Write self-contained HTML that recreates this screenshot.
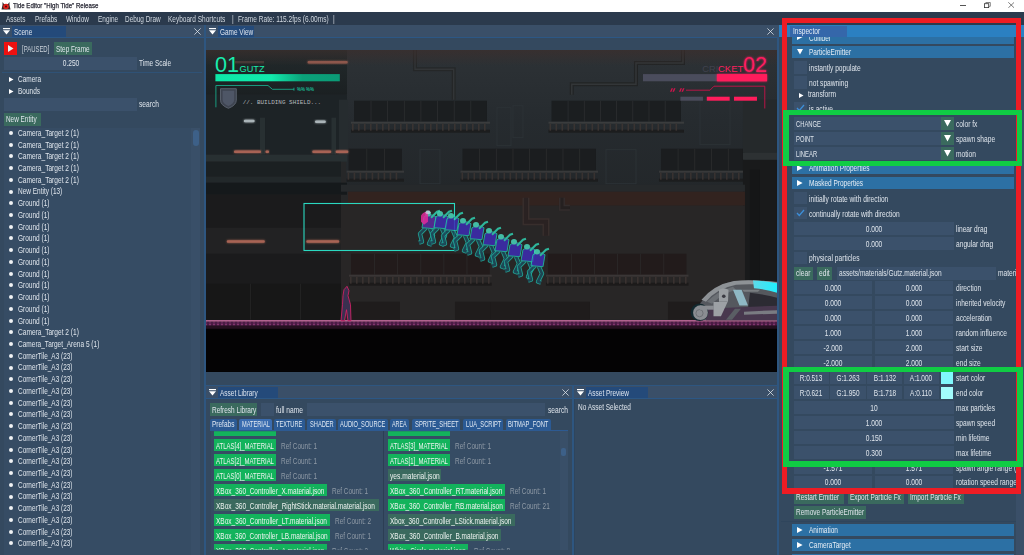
<!DOCTYPE html>
<html><head><meta charset="utf-8"><style>
html,body{margin:0;padding:0;width:1024px;height:555px;overflow:hidden;background:#34495f}
body{position:relative;font-family:"Liberation Sans",sans-serif}
div{position:absolute;box-sizing:border-box}
.t{white-space:nowrap;line-height:8px;transform-origin:0 0}
.c{text-align:center;transform-origin:50% 0}
</style></head><body>
<div style="left:0.00px;top:0.00px;width:1024.00px;height:555.00px;background:#34495f;"></div>
<div style="left:0.00px;top:0.00px;width:1024.00px;height:12.00px;background:#ffffff;"></div>
<svg style="position:absolute;left:1px;top:1px" width="10" height="10" viewBox="0 0 10 10"><path d="M1.5 1 L3 3 L7 3 L8.5 1 L8.5 4 L9.5 8.5 L0.5 8.5 L1.5 4Z" fill="#3a2a2a"/><circle cx="5" cy="5.5" r="2.8" fill="#e0201a"/><circle cx="5" cy="5.5" r="0.9" fill="#400"/></svg>
<div class="t" style="left:12.90px;top:2.16px;font-size:7.9px;color:#101018;transform:scaleX(0.775);-webkit-text-stroke:0.25px #303040;">Tide Editor "High Tide" Release</div>
<div style="left:960.00px;top:5.20px;width:5.60px;height:0.70px;background:#555;"></div>
<svg style="position:absolute;left:983.5px;top:2.2px" width="7" height="6" viewBox="0 0 7 6"><rect x="0.5" y="1.7" width="4.2" height="3.9" fill="none" stroke="#333" stroke-width="0.8"/><path d="M1.8 1.7 V0.5 H6.3 V4.3 H4.7" fill="none" stroke="#666" stroke-width="0.8"/></svg>
<svg style="position:absolute;left:1007.8px;top:2.2px" width="6.5" height="6.2" viewBox="0 0 6.5 6.2"><path d="M0.3 0.3 L6.2 5.9 M6.2 0.3 L0.3 5.9" stroke="#444" stroke-width="0.7"/></svg>
<div style="left:0.00px;top:12.00px;width:1024.00px;height:13.00px;background:#2b3a4d;"></div>
<div class="t" style="left:6.40px;top:14.72px;font-size:8.6px;color:#d0d7df;transform:scaleX(0.752);">Assets</div>
<div class="t" style="left:35.20px;top:14.72px;font-size:8.6px;color:#d0d7df;transform:scaleX(0.754);">Prefabs</div>
<div class="t" style="left:66.20px;top:14.72px;font-size:8.6px;color:#d0d7df;transform:scaleX(0.748);">Window</div>
<div class="t" style="left:97.70px;top:14.72px;font-size:8.6px;color:#d0d7df;transform:scaleX(0.752);">Engine</div>
<div class="t" style="left:125.30px;top:14.72px;font-size:8.6px;color:#d0d7df;transform:scaleX(0.748);">Debug Draw</div>
<div class="t" style="left:168.00px;top:14.72px;font-size:8.6px;color:#d0d7df;transform:scaleX(0.758);">Keyboard Shortcuts</div>
<div class="t" style="left:232.00px;top:14.72px;font-size:8.6px;color:#d0d7df;transform:scaleX(0.772);">|</div>
<div class="t" style="left:238.00px;top:14.72px;font-size:8.6px;color:#d0d7df;transform:scaleX(0.763);">Frame Rate: 115.2fps (6.00ms)</div>
<div class="t" style="left:333.00px;top:14.72px;font-size:8.6px;color:#d0d7df;transform:scaleX(0.772);">|</div>
<div style="left:0.00px;top:25.00px;width:204.00px;height:12.00px;background:#3a4f68;"></div>
<div style="left:0.00px;top:37.00px;width:204.00px;height:1.00px;background:#2c5785;"></div>
<svg style="position:absolute;left:3.00px;top:28.00px" width="7" height="7" viewBox="0 0 7 7"><rect x="0" y="0" width="7" height="1.2" fill="#fff"/><path d="M0 2.2 H7 L3.5 6.5Z" fill="#fff"/></svg>
<div style="left:12.00px;top:26.00px;width:54.00px;height:11.00px;background:#244a7a;"></div>
<div class="t" style="left:14.00px;top:27.92px;font-size:8.6px;color:#dde4ee;transform:scaleX(0.750);">Scene</div>
<svg style="position:absolute;left:194.00px;top:28.00px" width="7" height="7" viewBox="0 0 7 7"><path d="M0.4 0.4 L6.6 6.6 M6.6 0.4 L0.4 6.6" stroke="#e6ebf0" stroke-width="0.75"/></svg>
<div style="left:204.10px;top:25.00px;width:1.90px;height:530.00px;background:#2e5680;"></div>
<div style="left:4.30px;top:41.90px;width:12.80px;height:13.00px;background:#ee1111;"></div>
<svg style="position:absolute;left:8px;top:45px" width="6" height="7" viewBox="0 0 6 7"><path d="M0 0 L5.5 3.5 L0 7Z" fill="#e8f2f5"/></svg>
<div class="t" style="left:21.60px;top:44.82px;font-size:8.6px;color:#c8d0d8;transform:scaleX(0.691);">[PAUSED]</div>
<div style="left:54.00px;top:42.20px;width:37.90px;height:12.50px;background:#3a6a5e;"></div>
<div class="t" style="left:56.00px;top:44.72px;font-size:8.6px;color:#dfe5ec;transform:scaleX(0.749);">Step Frame</div>
<div style="left:4.30px;top:57.10px;width:132.60px;height:12.90px;background:#3b516b;"></div>
<div class="t c" style="left:-129.50px;top:58.82px;width:400px;font-size:8.6px;color:#dfe5ec;transform:scaleX(0.772);">0.250</div>
<div class="t" style="left:138.50px;top:58.82px;font-size:8.6px;color:#dfe5ec;transform:scaleX(0.754);">Time Scale</div>
<div style="left:2.00px;top:72.00px;width:200.00px;height:1.00px;background:#2f5276;"></div>
<svg style="position:absolute;left:9.2px;top:77.10px" width="5" height="5" viewBox="0 0 5 5"><path d="M0 0 L4.5 2.5 L0 5Z" fill="#fff"/></svg>
<div class="t" style="left:18.20px;top:74.92px;font-size:8.6px;color:#dfe5ec;transform:scaleX(0.753);">Camera</div>
<svg style="position:absolute;left:9.2px;top:88.83px" width="5" height="5" viewBox="0 0 5 5"><path d="M0 0 L4.5 2.5 L0 5Z" fill="#fff"/></svg>
<div class="t" style="left:18.20px;top:86.65px;font-size:8.6px;color:#dfe5ec;transform:scaleX(0.754);">Bounds</div>
<div style="left:4.30px;top:97.80px;width:132.60px;height:12.90px;background:#3b516b;"></div>
<div class="t" style="left:138.50px;top:100.32px;font-size:8.6px;color:#dfe5ec;transform:scaleX(0.772);">search</div>
<div style="left:4.30px;top:113.00px;width:36.50px;height:12.50px;background:#3a6a5e;"></div>
<div class="t" style="left:6.00px;top:115.22px;font-size:8.6px;color:#dfe5ec;transform:scaleX(0.745);">New Entity</div>
<div style="left:4.00px;top:128.00px;width:195.70px;height:427.00px;background:#364c64;"></div>
<div style="left:191.00px;top:128.00px;width:8.70px;height:427.00px;background:#394f68;"></div>
<div style="left:193.00px;top:129.70px;width:5.60px;height:16.30px;background:#3d6088;border-radius:3px;"></div>
<div style="left:9.10px;top:130.90px;width:4.00px;height:4.00px;background:#f0f2f4;border-radius:50%;"></div>
<div class="t" style="left:18.10px;top:128.82px;font-size:8.6px;color:#dfe5ec;transform:scaleX(0.768);">Camera_Target 2 (1)</div>
<div style="left:9.10px;top:142.63px;width:4.00px;height:4.00px;background:#f0f2f4;border-radius:50%;"></div>
<div class="t" style="left:18.10px;top:140.55px;font-size:8.6px;color:#dfe5ec;transform:scaleX(0.768);">Camera_Target 2 (1)</div>
<div style="left:9.10px;top:154.36px;width:4.00px;height:4.00px;background:#f0f2f4;border-radius:50%;"></div>
<div class="t" style="left:18.10px;top:152.28px;font-size:8.6px;color:#dfe5ec;transform:scaleX(0.768);">Camera_Target 2 (1)</div>
<div style="left:9.10px;top:166.09px;width:4.00px;height:4.00px;background:#f0f2f4;border-radius:50%;"></div>
<div class="t" style="left:18.10px;top:164.01px;font-size:8.6px;color:#dfe5ec;transform:scaleX(0.768);">Camera_Target 2 (1)</div>
<div style="left:9.10px;top:177.82px;width:4.00px;height:4.00px;background:#f0f2f4;border-radius:50%;"></div>
<div class="t" style="left:18.10px;top:175.74px;font-size:8.6px;color:#dfe5ec;transform:scaleX(0.768);">Camera_Target 2 (1)</div>
<div style="left:9.10px;top:189.55px;width:4.00px;height:4.00px;background:#f0f2f4;border-radius:50%;"></div>
<div class="t" style="left:18.10px;top:187.47px;font-size:8.6px;color:#dfe5ec;transform:scaleX(0.753);">New Entity (13)</div>
<div style="left:9.10px;top:201.28px;width:4.00px;height:4.00px;background:#f0f2f4;border-radius:50%;"></div>
<div class="t" style="left:18.10px;top:199.20px;font-size:8.6px;color:#dfe5ec;transform:scaleX(0.757);">Ground (1)</div>
<div style="left:9.10px;top:213.01px;width:4.00px;height:4.00px;background:#f0f2f4;border-radius:50%;"></div>
<div class="t" style="left:18.10px;top:210.93px;font-size:8.6px;color:#dfe5ec;transform:scaleX(0.757);">Ground (1)</div>
<div style="left:9.10px;top:224.74px;width:4.00px;height:4.00px;background:#f0f2f4;border-radius:50%;"></div>
<div class="t" style="left:18.10px;top:222.66px;font-size:8.6px;color:#dfe5ec;transform:scaleX(0.757);">Ground (1)</div>
<div style="left:9.10px;top:236.47px;width:4.00px;height:4.00px;background:#f0f2f4;border-radius:50%;"></div>
<div class="t" style="left:18.10px;top:234.39px;font-size:8.6px;color:#dfe5ec;transform:scaleX(0.757);">Ground (1)</div>
<div style="left:9.10px;top:248.20px;width:4.00px;height:4.00px;background:#f0f2f4;border-radius:50%;"></div>
<div class="t" style="left:18.10px;top:246.12px;font-size:8.6px;color:#dfe5ec;transform:scaleX(0.757);">Ground (1)</div>
<div style="left:9.10px;top:259.93px;width:4.00px;height:4.00px;background:#f0f2f4;border-radius:50%;"></div>
<div class="t" style="left:18.10px;top:257.85px;font-size:8.6px;color:#dfe5ec;transform:scaleX(0.757);">Ground (1)</div>
<div style="left:9.10px;top:271.66px;width:4.00px;height:4.00px;background:#f0f2f4;border-radius:50%;"></div>
<div class="t" style="left:18.10px;top:269.58px;font-size:8.6px;color:#dfe5ec;transform:scaleX(0.757);">Ground (1)</div>
<div style="left:9.10px;top:283.39px;width:4.00px;height:4.00px;background:#f0f2f4;border-radius:50%;"></div>
<div class="t" style="left:18.10px;top:281.31px;font-size:8.6px;color:#dfe5ec;transform:scaleX(0.757);">Ground (1)</div>
<div style="left:9.10px;top:295.12px;width:4.00px;height:4.00px;background:#f0f2f4;border-radius:50%;"></div>
<div class="t" style="left:18.10px;top:293.04px;font-size:8.6px;color:#dfe5ec;transform:scaleX(0.757);">Ground (1)</div>
<div style="left:9.10px;top:306.85px;width:4.00px;height:4.00px;background:#f0f2f4;border-radius:50%;"></div>
<div class="t" style="left:18.10px;top:304.77px;font-size:8.6px;color:#dfe5ec;transform:scaleX(0.757);">Ground (1)</div>
<div style="left:9.10px;top:318.58px;width:4.00px;height:4.00px;background:#f0f2f4;border-radius:50%;"></div>
<div class="t" style="left:18.10px;top:316.50px;font-size:8.6px;color:#dfe5ec;transform:scaleX(0.757);">Ground (1)</div>
<div style="left:9.10px;top:330.31px;width:4.00px;height:4.00px;background:#f0f2f4;border-radius:50%;"></div>
<div class="t" style="left:18.10px;top:328.23px;font-size:8.6px;color:#dfe5ec;transform:scaleX(0.768);">Camera_Target 2 (1)</div>
<div style="left:9.10px;top:342.04px;width:4.00px;height:4.00px;background:#f0f2f4;border-radius:50%;"></div>
<div class="t" style="left:18.10px;top:339.96px;font-size:8.6px;color:#dfe5ec;transform:scaleX(0.760);">Camera_Target_Arena 5 (1)</div>
<div style="left:9.10px;top:353.77px;width:4.00px;height:4.00px;background:#f0f2f4;border-radius:50%;"></div>
<div class="t" style="left:18.10px;top:351.69px;font-size:8.6px;color:#dfe5ec;transform:scaleX(0.748);">CornerTile_A3 (23)</div>
<div style="left:9.10px;top:365.50px;width:4.00px;height:4.00px;background:#f0f2f4;border-radius:50%;"></div>
<div class="t" style="left:18.10px;top:363.42px;font-size:8.6px;color:#dfe5ec;transform:scaleX(0.748);">CornerTile_A3 (23)</div>
<div style="left:9.10px;top:377.23px;width:4.00px;height:4.00px;background:#f0f2f4;border-radius:50%;"></div>
<div class="t" style="left:18.10px;top:375.15px;font-size:8.6px;color:#dfe5ec;transform:scaleX(0.748);">CornerTile_A3 (23)</div>
<div style="left:9.10px;top:388.96px;width:4.00px;height:4.00px;background:#f0f2f4;border-radius:50%;"></div>
<div class="t" style="left:18.10px;top:386.88px;font-size:8.6px;color:#dfe5ec;transform:scaleX(0.748);">CornerTile_A3 (23)</div>
<div style="left:9.10px;top:400.69px;width:4.00px;height:4.00px;background:#f0f2f4;border-radius:50%;"></div>
<div class="t" style="left:18.10px;top:398.61px;font-size:8.6px;color:#dfe5ec;transform:scaleX(0.748);">CornerTile_A3 (23)</div>
<div style="left:9.10px;top:412.42px;width:4.00px;height:4.00px;background:#f0f2f4;border-radius:50%;"></div>
<div class="t" style="left:18.10px;top:410.34px;font-size:8.6px;color:#dfe5ec;transform:scaleX(0.748);">CornerTile_A3 (23)</div>
<div style="left:9.10px;top:424.15px;width:4.00px;height:4.00px;background:#f0f2f4;border-radius:50%;"></div>
<div class="t" style="left:18.10px;top:422.07px;font-size:8.6px;color:#dfe5ec;transform:scaleX(0.748);">CornerTile_A3 (23)</div>
<div style="left:9.10px;top:435.88px;width:4.00px;height:4.00px;background:#f0f2f4;border-radius:50%;"></div>
<div class="t" style="left:18.10px;top:433.80px;font-size:8.6px;color:#dfe5ec;transform:scaleX(0.748);">CornerTile_A3 (23)</div>
<div style="left:9.10px;top:447.61px;width:4.00px;height:4.00px;background:#f0f2f4;border-radius:50%;"></div>
<div class="t" style="left:18.10px;top:445.53px;font-size:8.6px;color:#dfe5ec;transform:scaleX(0.748);">CornerTile_A3 (23)</div>
<div style="left:9.10px;top:459.34px;width:4.00px;height:4.00px;background:#f0f2f4;border-radius:50%;"></div>
<div class="t" style="left:18.10px;top:457.26px;font-size:8.6px;color:#dfe5ec;transform:scaleX(0.748);">CornerTile_A3 (23)</div>
<div style="left:9.10px;top:471.07px;width:4.00px;height:4.00px;background:#f0f2f4;border-radius:50%;"></div>
<div class="t" style="left:18.10px;top:468.99px;font-size:8.6px;color:#dfe5ec;transform:scaleX(0.748);">CornerTile_A3 (23)</div>
<div style="left:9.10px;top:482.80px;width:4.00px;height:4.00px;background:#f0f2f4;border-radius:50%;"></div>
<div class="t" style="left:18.10px;top:480.72px;font-size:8.6px;color:#dfe5ec;transform:scaleX(0.748);">CornerTile_A3 (23)</div>
<div style="left:9.10px;top:494.53px;width:4.00px;height:4.00px;background:#f0f2f4;border-radius:50%;"></div>
<div class="t" style="left:18.10px;top:492.45px;font-size:8.6px;color:#dfe5ec;transform:scaleX(0.748);">CornerTile_A3 (23)</div>
<div style="left:9.10px;top:506.26px;width:4.00px;height:4.00px;background:#f0f2f4;border-radius:50%;"></div>
<div class="t" style="left:18.10px;top:504.18px;font-size:8.6px;color:#dfe5ec;transform:scaleX(0.748);">CornerTile_A3 (23)</div>
<div style="left:9.10px;top:517.99px;width:4.00px;height:4.00px;background:#f0f2f4;border-radius:50%;"></div>
<div class="t" style="left:18.10px;top:515.91px;font-size:8.6px;color:#dfe5ec;transform:scaleX(0.748);">CornerTile_A3 (23)</div>
<div style="left:9.10px;top:529.72px;width:4.00px;height:4.00px;background:#f0f2f4;border-radius:50%;"></div>
<div class="t" style="left:18.10px;top:527.64px;font-size:8.6px;color:#dfe5ec;transform:scaleX(0.748);">CornerTile_A3 (23)</div>
<div style="left:9.10px;top:541.45px;width:4.00px;height:4.00px;background:#f0f2f4;border-radius:50%;"></div>
<div class="t" style="left:18.10px;top:539.37px;font-size:8.6px;color:#dfe5ec;transform:scaleX(0.748);">CornerTile_A3 (23)</div>
<div style="left:205.50px;top:25.00px;width:573.50px;height:12.00px;background:#3a4f68;"></div>
<div style="left:205.50px;top:37.00px;width:573.50px;height:1.00px;background:#2c5785;"></div>
<svg style="position:absolute;left:208.50px;top:28.00px" width="7" height="7" viewBox="0 0 7 7"><rect x="0" y="0" width="7" height="1.2" fill="#fff"/><path d="M0 2.2 H7 L3.5 6.5Z" fill="#fff"/></svg>
<div style="left:217.50px;top:26.00px;width:36.00px;height:11.00px;background:#244a7a;"></div>
<div class="t" style="left:219.50px;top:27.92px;font-size:8.6px;color:#dde4ee;transform:scaleX(0.749);">Game View</div>
<svg style="position:absolute;left:767.20px;top:28.00px" width="7" height="7" viewBox="0 0 7 7"><path d="M0.4 0.4 L6.6 6.6 M6.6 0.4 L0.4 6.6" stroke="#e6ebf0" stroke-width="0.75"/></svg>
<div style="left:206.00px;top:50.30px;width:570.70px;height:321.70px;background:#1d2224;"></div>
<svg style="position:absolute;left:206px;top:50.3px" width="570.7" height="321.7" viewBox="206 50.3 570.7 321.7">
<defs>
<linearGradient id="grR" x1="0" y1="0" x2="0" y2="1"><stop offset="0" stop-color="#2d3236"/><stop offset="0.5" stop-color="#262b2f"/><stop offset="1" stop-color="#23272a"/></linearGradient>
<linearGradient id="grL" x1="0" y1="0" x2="0" y2="1"><stop offset="0" stop-color="#222a2c"/><stop offset="1" stop-color="#1b2022"/></linearGradient>
<linearGradient id="bar1" x1="0" y1="0" x2="1" y2="0"><stop offset="0" stop-color="#0de8a8"/><stop offset="0.45" stop-color="#12eaac"/><stop offset="0.7" stop-color="#0ba27a"/><stop offset="1" stop-color="#0b9a76"/></linearGradient>
<filter id="glow" x="-20%" y="-50%" width="140%" height="200%"><feGaussianBlur stdDeviation="1.2" result="b"/><feMerge><feMergeNode in="b"/><feMergeNode in="SourceGraphic"/></feMerge></filter>
<linearGradient id="cyg" x1="0" y1="0" x2="1" y2="0"><stop offset="0" stop-color="#5fd8e8"/><stop offset="1" stop-color="#1ff0ff"/></linearGradient>
</defs>
<rect x="206" y="50" width="571" height="322" fill="#262728"/>
<rect x="346" y="50" width="431" height="142" fill="url(#grR)"/>
<path d="M571.8 95 V84.6 H636 V63.2 H683 V50" fill="none" stroke="#222425" stroke-width="4"/>
<path d="M571.8 95 V84.6 H636 V63.2 H683 V50" fill="none" stroke="#333638" stroke-width="1.5"/>
<path d="M415 50 V69.6 H453.7 V100" fill="none" stroke="#252728" stroke-width="4"/>
<path d="M415 50 V69.6 H453.7 V100" fill="none" stroke="#323537" stroke-width="1.4"/>
<linearGradient id="topw" x1="0" y1="0" x2="0" y2="1"><stop offset="0" stop-color="#3c2e2c" stop-opacity="0.7"/><stop offset="1" stop-color="#3c2e2c" stop-opacity="0"/></linearGradient>
<rect x="354" y="101" width="133" height="21" fill="#1b1e20"/>
<rect x="370.6" y="101" width="0.8" height="21" fill="#2c2e30"/>
<rect x="387.2" y="101" width="0.8" height="21" fill="#2c2e30"/>
<rect x="403.9" y="101" width="0.8" height="21" fill="#2c2e30"/>
<rect x="420.5" y="101" width="0.8" height="21" fill="#2c2e30"/>
<rect x="437.1" y="101" width="0.8" height="21" fill="#2c2e30"/>
<rect x="453.8" y="101" width="0.8" height="21" fill="#2c2e30"/>
<rect x="470.4" y="101" width="0.8" height="21" fill="#2c2e30"/>
<rect x="351" y="122" width="139" height="2" fill="#3a3c3d"/>
<rect x="351" y="130" width="139" height="3" fill="#1c1d1e"/>
<rect x="352" y="124" width="1.6" height="7" fill="#3a3432"/>
<rect x="358" y="124" width="1.6" height="7" fill="#3a3432"/>
<rect x="364" y="124" width="1.6" height="7" fill="#3a3432"/>
<rect x="370" y="124" width="1.6" height="7" fill="#3a3432"/>
<rect x="376" y="124" width="1.6" height="7" fill="#3a3432"/>
<rect x="382" y="124" width="1.6" height="7" fill="#3a3432"/>
<rect x="388" y="124" width="1.6" height="7" fill="#3a3432"/>
<rect x="394" y="124" width="1.6" height="7" fill="#3a3432"/>
<rect x="400" y="124" width="1.6" height="7" fill="#3a3432"/>
<rect x="406" y="124" width="1.6" height="7" fill="#3a3432"/>
<rect x="412" y="124" width="1.6" height="7" fill="#3a3432"/>
<rect x="418" y="124" width="1.6" height="7" fill="#3a3432"/>
<rect x="424" y="124" width="1.6" height="7" fill="#3a3432"/>
<rect x="430" y="124" width="1.6" height="7" fill="#3a3432"/>
<rect x="436" y="124" width="1.6" height="7" fill="#3a3432"/>
<rect x="442" y="124" width="1.6" height="7" fill="#3a3432"/>
<rect x="448" y="124" width="1.6" height="7" fill="#3a3432"/>
<rect x="454" y="124" width="1.6" height="7" fill="#3a3432"/>
<rect x="460" y="124" width="1.6" height="7" fill="#3a3432"/>
<rect x="466" y="124" width="1.6" height="7" fill="#3a3432"/>
<rect x="472" y="124" width="1.6" height="7" fill="#3a3432"/>
<rect x="478" y="124" width="1.6" height="7" fill="#3a3432"/>
<rect x="484" y="124" width="1.6" height="7" fill="#3a3432"/>
<rect x="551.5" y="101" width="129.5" height="21" fill="#1b1e20"/>
<rect x="567.7" y="101" width="0.8" height="21" fill="#2c2e30"/>
<rect x="583.9" y="101" width="0.8" height="21" fill="#2c2e30"/>
<rect x="600.1" y="101" width="0.8" height="21" fill="#2c2e30"/>
<rect x="616.2" y="101" width="0.8" height="21" fill="#2c2e30"/>
<rect x="632.4" y="101" width="0.8" height="21" fill="#2c2e30"/>
<rect x="648.6" y="101" width="0.8" height="21" fill="#2c2e30"/>
<rect x="664.8" y="101" width="0.8" height="21" fill="#2c2e30"/>
<rect x="548.5" y="122" width="135.5" height="2" fill="#3a3c3d"/>
<rect x="548.5" y="130" width="135.5" height="3" fill="#1c1d1e"/>
<rect x="549.5" y="124" width="1.6" height="7" fill="#3a3432"/>
<rect x="555.5" y="124" width="1.6" height="7" fill="#3a3432"/>
<rect x="561.5" y="124" width="1.6" height="7" fill="#3a3432"/>
<rect x="567.5" y="124" width="1.6" height="7" fill="#3a3432"/>
<rect x="573.5" y="124" width="1.6" height="7" fill="#3a3432"/>
<rect x="579.5" y="124" width="1.6" height="7" fill="#3a3432"/>
<rect x="585.5" y="124" width="1.6" height="7" fill="#3a3432"/>
<rect x="591.5" y="124" width="1.6" height="7" fill="#3a3432"/>
<rect x="597.5" y="124" width="1.6" height="7" fill="#3a3432"/>
<rect x="603.5" y="124" width="1.6" height="7" fill="#3a3432"/>
<rect x="609.5" y="124" width="1.6" height="7" fill="#3a3432"/>
<rect x="615.5" y="124" width="1.6" height="7" fill="#3a3432"/>
<rect x="621.5" y="124" width="1.6" height="7" fill="#3a3432"/>
<rect x="627.5" y="124" width="1.6" height="7" fill="#3a3432"/>
<rect x="633.5" y="124" width="1.6" height="7" fill="#3a3432"/>
<rect x="639.5" y="124" width="1.6" height="7" fill="#3a3432"/>
<rect x="645.5" y="124" width="1.6" height="7" fill="#3a3432"/>
<rect x="651.5" y="124" width="1.6" height="7" fill="#3a3432"/>
<rect x="657.5" y="124" width="1.6" height="7" fill="#3a3432"/>
<rect x="663.5" y="124" width="1.6" height="7" fill="#3a3432"/>
<rect x="669.5" y="124" width="1.6" height="7" fill="#3a3432"/>
<rect x="675.5" y="124" width="1.6" height="7" fill="#3a3432"/>
<rect x="348.6" y="149" width="53.39999999999998" height="22" fill="#1b1d1f"/>
<rect x="366.4" y="149" width="0.8" height="22" fill="#2c2d2e"/>
<rect x="384.2" y="149" width="0.8" height="22" fill="#2c2d2e"/>
<rect x="346.6" y="171" width="57.39999999999998" height="2" fill="#38393a"/>
<rect x="346.6" y="179" width="57.39999999999998" height="3" fill="#1c1d1e"/>
<rect x="347.6" y="173" width="1.6" height="7" fill="#383230"/>
<rect x="353.6" y="173" width="1.6" height="7" fill="#383230"/>
<rect x="359.6" y="173" width="1.6" height="7" fill="#383230"/>
<rect x="365.6" y="173" width="1.6" height="7" fill="#383230"/>
<rect x="371.6" y="173" width="1.6" height="7" fill="#383230"/>
<rect x="377.6" y="173" width="1.6" height="7" fill="#383230"/>
<rect x="383.6" y="173" width="1.6" height="7" fill="#383230"/>
<rect x="389.6" y="173" width="1.6" height="7" fill="#383230"/>
<rect x="395.6" y="173" width="1.6" height="7" fill="#383230"/>
<rect x="462.5" y="149" width="133.5" height="22" fill="#1b1d1f"/>
<rect x="479.2" y="149" width="0.8" height="22" fill="#2c2d2e"/>
<rect x="495.9" y="149" width="0.8" height="22" fill="#2c2d2e"/>
<rect x="512.6" y="149" width="0.8" height="22" fill="#2c2d2e"/>
<rect x="529.2" y="149" width="0.8" height="22" fill="#2c2d2e"/>
<rect x="545.9" y="149" width="0.8" height="22" fill="#2c2d2e"/>
<rect x="562.6" y="149" width="0.8" height="22" fill="#2c2d2e"/>
<rect x="579.3" y="149" width="0.8" height="22" fill="#2c2d2e"/>
<rect x="460.5" y="171" width="137.5" height="2" fill="#38393a"/>
<rect x="460.5" y="179" width="137.5" height="3" fill="#1c1d1e"/>
<rect x="461.5" y="173" width="1.6" height="7" fill="#383230"/>
<rect x="467.5" y="173" width="1.6" height="7" fill="#383230"/>
<rect x="473.5" y="173" width="1.6" height="7" fill="#383230"/>
<rect x="479.5" y="173" width="1.6" height="7" fill="#383230"/>
<rect x="485.5" y="173" width="1.6" height="7" fill="#383230"/>
<rect x="491.5" y="173" width="1.6" height="7" fill="#383230"/>
<rect x="497.5" y="173" width="1.6" height="7" fill="#383230"/>
<rect x="503.5" y="173" width="1.6" height="7" fill="#383230"/>
<rect x="509.5" y="173" width="1.6" height="7" fill="#383230"/>
<rect x="515.5" y="173" width="1.6" height="7" fill="#383230"/>
<rect x="521.5" y="173" width="1.6" height="7" fill="#383230"/>
<rect x="527.5" y="173" width="1.6" height="7" fill="#383230"/>
<rect x="533.5" y="173" width="1.6" height="7" fill="#383230"/>
<rect x="539.5" y="173" width="1.6" height="7" fill="#383230"/>
<rect x="545.5" y="173" width="1.6" height="7" fill="#383230"/>
<rect x="551.5" y="173" width="1.6" height="7" fill="#383230"/>
<rect x="557.5" y="173" width="1.6" height="7" fill="#383230"/>
<rect x="563.5" y="173" width="1.6" height="7" fill="#383230"/>
<rect x="569.5" y="173" width="1.6" height="7" fill="#383230"/>
<rect x="575.5" y="173" width="1.6" height="7" fill="#383230"/>
<rect x="581.5" y="173" width="1.6" height="7" fill="#383230"/>
<rect x="587.5" y="173" width="1.6" height="7" fill="#383230"/>
<rect x="593.5" y="173" width="1.6" height="7" fill="#383230"/>
<rect x="661" y="149" width="83.60000000000002" height="22" fill="#1b1d1f"/>
<rect x="677.7" y="149" width="0.8" height="22" fill="#2c2d2e"/>
<rect x="694.4" y="149" width="0.8" height="22" fill="#2c2d2e"/>
<rect x="711.2" y="149" width="0.8" height="22" fill="#2c2d2e"/>
<rect x="727.9" y="149" width="0.8" height="22" fill="#2c2d2e"/>
<rect x="659" y="171" width="87.60000000000002" height="2" fill="#38393a"/>
<rect x="659" y="179" width="87.60000000000002" height="3" fill="#1c1d1e"/>
<rect x="660" y="173" width="1.6" height="7" fill="#383230"/>
<rect x="666" y="173" width="1.6" height="7" fill="#383230"/>
<rect x="672" y="173" width="1.6" height="7" fill="#383230"/>
<rect x="678" y="173" width="1.6" height="7" fill="#383230"/>
<rect x="684" y="173" width="1.6" height="7" fill="#383230"/>
<rect x="690" y="173" width="1.6" height="7" fill="#383230"/>
<rect x="696" y="173" width="1.6" height="7" fill="#383230"/>
<rect x="702" y="173" width="1.6" height="7" fill="#383230"/>
<rect x="708" y="173" width="1.6" height="7" fill="#383230"/>
<rect x="714" y="173" width="1.6" height="7" fill="#383230"/>
<rect x="720" y="173" width="1.6" height="7" fill="#383230"/>
<rect x="726" y="173" width="1.6" height="7" fill="#383230"/>
<rect x="732" y="173" width="1.6" height="7" fill="#383230"/>
<rect x="738" y="173" width="1.6" height="7" fill="#383230"/>
<rect x="497" y="108" width="14" height="38" fill="none" stroke="#2c3236" stroke-width="1"/>
<rect x="513" y="106" width="10" height="32" fill="none" stroke="#2c3236" stroke-width="1"/>
<rect x="700" y="100" width="30" height="45" fill="none" stroke="#2c3236" stroke-width="1"/>
<rect x="606" y="150" width="30" height="34" fill="none" stroke="#2c3236" stroke-width="1"/>
<rect x="420" y="150" width="20" height="34" fill="none" stroke="#2c3236" stroke-width="1"/>
<rect x="743" y="100" width="34" height="53" fill="#25292b"/>
<rect x="743" y="160" width="34" height="162" fill="#191a1b"/>
<rect x="743" y="153" width="34" height="7" fill="#2d3133"/>
<rect x="750" y="170" width="10" height="150" fill="#151617"/>
<rect x="206" y="50" width="141" height="45" fill="url(#grL)"/>
<rect x="206" y="95" width="141" height="60" fill="#1d2326"/>
<rect x="339" y="100" width="9" height="55" fill="#262c2f"/>
<rect x="206" y="155" width="141" height="7" fill="#283032"/>
<rect x="206" y="162" width="135" height="15" fill="#1b2022"/>
<rect x="206" y="177" width="135" height="6" fill="#22282a"/>
<rect x="206" y="183" width="141" height="12" fill="#15191b"/>
<rect x="206" y="50" width="571" height="16" fill="url(#topw)"/>
<rect x="341" y="185" width="404" height="7" fill="#26292b"/>
<rect x="348" y="192" width="397" height="14" fill="#32231f"/>
<rect x="341" y="206" width="404" height="114" fill="#282626"/>
<path d="M526 198 V222 H546 V236" fill="none" stroke="#382e2c" stroke-width="7"/>
<path d="M526 198 V222 H546 V236" fill="none" stroke="#2a2222" stroke-width="4"/>
<path d="M562 198 V208 H570" fill="none" stroke="#332c2c" stroke-width="6"/>
<path d="M562 198 V208 H570" fill="none" stroke="#252020" stroke-width="3"/>
<rect x="206" y="195" width="135" height="125" fill="#1b1b1c"/>
<rect x="206" y="228" width="135" height="26" fill="#222223"/>
<rect x="206" y="284" width="135" height="36" fill="#171717"/>
<rect x="250" y="284" width="1" height="36" fill="#222"/>
<rect x="300" y="284" width="1" height="36" fill="#222"/>
<rect x="260" y="118" width="5" height="37" fill="#283032"/><rect x="331.5" y="118" width="4.5" height="37" fill="#283032"/>
<rect x="243.8" y="120" width="10.8" height="2.6" rx="1.2" fill="#aab4b8" filter="url(#glow)"/><rect x="315" y="120.7" width="10.8" height="2.6" rx="1.2" fill="#aab4b8" filter="url(#glow)"/>
<rect x="307.6" y="61.3" width="40.0" height="2.6" rx="1" fill="#a86454" opacity="0.8" filter="url(#glow)"/>
<rect x="234" y="150.8" width="27" height="2.6" rx="1" fill="#a86454" opacity="1" filter="url(#glow)"/>
<rect x="265.5" y="150.8" width="3.5" height="2.6" rx="1" fill="#a86454" opacity="1" filter="url(#glow)"/>
<rect x="312.3" y="150.8" width="18.899999999999977" height="2.6" rx="1" fill="#a86454" opacity="1" filter="url(#glow)"/>
<rect x="335.7" y="150.8" width="12.600000000000023" height="2.6" rx="1" fill="#a86454" opacity="1" filter="url(#glow)"/>
<rect x="226.8" y="240.5" width="38.0" height="2.6" rx="1" fill="#a86454" opacity="1" filter="url(#glow)"/>
<rect x="306.3" y="240.5" width="32.89999999999998" height="2.6" rx="1" fill="#a86454" opacity="1" filter="url(#glow)"/>
<rect x="235" y="61.3" width="29" height="2.4" fill="#86584c" opacity="0.35"/>
<rect x="351" y="254" width="138.7" height="21" fill="#221b1b"/>
<rect x="374.1" y="254" width="0.8" height="21" fill="#2c2a2a"/>
<rect x="397.2" y="254" width="0.8" height="21" fill="#2c2a2a"/>
<rect x="420.4" y="254" width="0.8" height="21" fill="#2c2a2a"/>
<rect x="443.5" y="254" width="0.8" height="21" fill="#2c2a2a"/>
<rect x="466.6" y="254" width="0.8" height="21" fill="#2c2a2a"/>
<rect x="349" y="275" width="142.7" height="2" fill="#3a3636"/>
<rect x="349" y="283" width="142.7" height="3" fill="#1c1a1a"/>
<rect x="350" y="277" width="1.6" height="7" fill="#3a3230"/>
<rect x="356" y="277" width="1.6" height="7" fill="#3a3230"/>
<rect x="362" y="277" width="1.6" height="7" fill="#3a3230"/>
<rect x="368" y="277" width="1.6" height="7" fill="#3a3230"/>
<rect x="374" y="277" width="1.6" height="7" fill="#3a3230"/>
<rect x="380" y="277" width="1.6" height="7" fill="#3a3230"/>
<rect x="386" y="277" width="1.6" height="7" fill="#3a3230"/>
<rect x="392" y="277" width="1.6" height="7" fill="#3a3230"/>
<rect x="398" y="277" width="1.6" height="7" fill="#3a3230"/>
<rect x="404" y="277" width="1.6" height="7" fill="#3a3230"/>
<rect x="410" y="277" width="1.6" height="7" fill="#3a3230"/>
<rect x="416" y="277" width="1.6" height="7" fill="#3a3230"/>
<rect x="422" y="277" width="1.6" height="7" fill="#3a3230"/>
<rect x="428" y="277" width="1.6" height="7" fill="#3a3230"/>
<rect x="434" y="277" width="1.6" height="7" fill="#3a3230"/>
<rect x="440" y="277" width="1.6" height="7" fill="#3a3230"/>
<rect x="446" y="277" width="1.6" height="7" fill="#3a3230"/>
<rect x="452" y="277" width="1.6" height="7" fill="#3a3230"/>
<rect x="458" y="277" width="1.6" height="7" fill="#3a3230"/>
<rect x="464" y="277" width="1.6" height="7" fill="#3a3230"/>
<rect x="470" y="277" width="1.6" height="7" fill="#3a3230"/>
<rect x="476" y="277" width="1.6" height="7" fill="#3a3230"/>
<rect x="482" y="277" width="1.6" height="7" fill="#3a3230"/>
<rect x="488" y="277" width="1.6" height="7" fill="#3a3230"/>
<rect x="548" y="254" width="138.5" height="21" fill="#221b1b"/>
<rect x="571.1" y="254" width="0.8" height="21" fill="#2c2a2a"/>
<rect x="594.2" y="254" width="0.8" height="21" fill="#2c2a2a"/>
<rect x="617.2" y="254" width="0.8" height="21" fill="#2c2a2a"/>
<rect x="640.3" y="254" width="0.8" height="21" fill="#2c2a2a"/>
<rect x="663.4" y="254" width="0.8" height="21" fill="#2c2a2a"/>
<rect x="546" y="275" width="142.5" height="2" fill="#3a3636"/>
<rect x="546" y="283" width="142.5" height="3" fill="#1c1a1a"/>
<rect x="547" y="277" width="1.6" height="7" fill="#3a3230"/>
<rect x="553" y="277" width="1.6" height="7" fill="#3a3230"/>
<rect x="559" y="277" width="1.6" height="7" fill="#3a3230"/>
<rect x="565" y="277" width="1.6" height="7" fill="#3a3230"/>
<rect x="571" y="277" width="1.6" height="7" fill="#3a3230"/>
<rect x="577" y="277" width="1.6" height="7" fill="#3a3230"/>
<rect x="583" y="277" width="1.6" height="7" fill="#3a3230"/>
<rect x="589" y="277" width="1.6" height="7" fill="#3a3230"/>
<rect x="595" y="277" width="1.6" height="7" fill="#3a3230"/>
<rect x="601" y="277" width="1.6" height="7" fill="#3a3230"/>
<rect x="607" y="277" width="1.6" height="7" fill="#3a3230"/>
<rect x="613" y="277" width="1.6" height="7" fill="#3a3230"/>
<rect x="619" y="277" width="1.6" height="7" fill="#3a3230"/>
<rect x="625" y="277" width="1.6" height="7" fill="#3a3230"/>
<rect x="631" y="277" width="1.6" height="7" fill="#3a3230"/>
<rect x="637" y="277" width="1.6" height="7" fill="#3a3230"/>
<rect x="643" y="277" width="1.6" height="7" fill="#3a3230"/>
<rect x="649" y="277" width="1.6" height="7" fill="#3a3230"/>
<rect x="655" y="277" width="1.6" height="7" fill="#3a3230"/>
<rect x="661" y="277" width="1.6" height="7" fill="#3a3230"/>
<rect x="667" y="277" width="1.6" height="7" fill="#3a3230"/>
<rect x="673" y="277" width="1.6" height="7" fill="#3a3230"/>
<rect x="679" y="277" width="1.6" height="7" fill="#3a3230"/>
<rect x="685" y="277" width="1.6" height="7" fill="#3a3230"/>
<rect x="351" y="302" width="49" height="18" fill="#1f1c1c"/>
<rect x="455" y="302" width="36" height="18" fill="#1f1c1c"/>
<rect x="491" y="302" width="99" height="18" fill="#1f1c1c"/>
<rect x="668" y="302" width="32" height="18" fill="#1f1c1c"/>
<rect x="206" y="320.3" width="571" height="52" fill="#040304"/>
<pattern id="gpat" x="0" y="0" width="4" height="3" patternUnits="userSpaceOnUse"><rect width="4" height="3" fill="#4a1c44"/><rect x="1" y="0" width="2" height="1.5" fill="#8a3a74"/></pattern>
<rect x="206" y="320.3" width="571" height="1.8" fill="#b0628e"/>
<rect x="206" y="322.1" width="571" height="4" fill="url(#gpat)"/>
<rect x="206" y="326.1" width="571" height="3" fill="#24101f"/>
<text x="215" y="72" font-family="Liberation Sans" font-size="22" fill="#18eeae" textLength="24" lengthAdjust="spacingAndGlyphs">01</text>
<text x="239.5" y="72" font-family="Liberation Sans" font-size="9.3" fill="#18eeae" textLength="25" lengthAdjust="spacingAndGlyphs">GUTZ</text>
<rect x="215.4" y="74.4" width="124.4" height="7.2" fill="url(#bar1)"/>
<path d="M215.9 107.6 V85.8 H268 L272.4 89.6 H294" fill="none" stroke="#18a888" stroke-width="0.9"/>
<rect x="293.5" y="88" width="0.9" height="3" fill="#18a888"/>
<text x="297" y="91.3" font-family="Liberation Sans" font-size="4.5" fill="#18b090" font-weight="bold">%%</text><text x="306" y="91.3" font-family="Liberation Sans" font-size="4.5" fill="#18b090" font-weight="bold">%%</text>
<path d="M220.5 89 H236.3 V100.5 Q236.3 105.5 228.4 108.6 Q220.5 105.5 220.5 100.5Z" fill="#3e4450" stroke="#575e6a" stroke-width="1"/><path d="M222.6 91 H234.2 V100 Q234.2 103.8 228.4 106.2 Q222.6 103.8 222.6 100Z" fill="#4e5666"/>
<text x="242.7" y="104.8" font-family="Liberation Mono" font-size="6.2" fill="#b4b8bc" textLength="78.5" lengthAdjust="spacingAndGlyphs">//. BUILDING SHIELD...</text>
<text x="702.4" y="72" font-family="Liberation Sans" font-size="9.3" fill="#40424e" textLength="16" lengthAdjust="spacingAndGlyphs">CRI</text>
<text x="718" y="72" font-family="Liberation Sans" font-size="9.3" fill="#ff1f5e" textLength="25.4" lengthAdjust="spacingAndGlyphs">CKET</text>
<text x="743.4" y="72" font-family="Liberation Sans" font-size="22" fill="#ff1f5e" textLength="24" lengthAdjust="spacingAndGlyphs" filter="url(#glow)">02</text>
<rect x="643" y="74.4" width="74" height="7.2" fill="#4a4c5c"/>
<rect x="717" y="74.4" width="50" height="7.2" fill="#ff1d5c" filter="url(#glow)"/>
<path d="M686 90.5 H710 L714 86.5 H764.8 V108.8" fill="none" stroke="#c8124a" stroke-width="0.9"/>
<path d="M670 92 L671.5 88.5 H673 L671.5 92Z M672.5 92 L674 88.5 H675.5 L674 92Z M679 92 L680.5 88.5 H682 L680.5 92Z M681.5 92 L683 88.5 H684.5 L683 92Z" fill="#d0144c"/>
<rect x="680.4" y="97" width="22.6" height="4" fill="#4a4c5c"/>
<rect x="706.8" y="97" width="22.9" height="4" fill="#ff1d5c"/>
<rect x="734" y="97" width="23" height="4" fill="#ff1d5c"/>
<rect x="304" y="203.8" width="150.5" height="47" fill="none" stroke="#2ad8c0" stroke-width="1.1"/>
<g transform="translate(429,214)" opacity="0.85"><path d="M-3 14 L-9 20 L-7 28 L-10 29 M1 15 L4 22 L0 30 L3 31" fill="none" stroke="#22b0a0" stroke-width="4.4" stroke-linejoin="round"/><path d="M-3 14 L-9 20 L-7 28 L-10 29 M1 15 L4 22 L0 30 L3 31" fill="none" stroke="#1c4c5c" stroke-width="2.6" stroke-linejoin="round"/><path d="M-5 3 Q1 -1 7 3 L5 15 L-7 14Z" fill="#5a2aa0" stroke="#22c0a8" stroke-width="1"/><path d="M2 4 L8 -2 L11 -3" fill="none" stroke="#30d0b0" stroke-width="2"/><ellipse cx="-1" cy="0" rx="3" ry="2.8" fill="#48d8bc"/></g>
<g transform="translate(441,214)" opacity="0.85"><path d="M-3 14 L-9 20 L-7 28 L-10 29 M1 15 L4 22 L0 30 L3 31" fill="none" stroke="#22b0a0" stroke-width="4.4" stroke-linejoin="round"/><path d="M-3 14 L-9 20 L-7 28 L-10 29 M1 15 L4 22 L0 30 L3 31" fill="none" stroke="#1c4c5c" stroke-width="2.6" stroke-linejoin="round"/><path d="M-5 3 Q1 -1 7 3 L5 15 L-7 14Z" fill="#3e2cb4" stroke="#22c0a8" stroke-width="1"/><path d="M2 4 L8 -2 L11 -3" fill="none" stroke="#30d0b0" stroke-width="2"/><ellipse cx="-1" cy="0" rx="3" ry="2.8" fill="#48d8bc"/></g>
<g transform="translate(452,216)" opacity="0.85"><path d="M-3 14 L-9 20 L-7 28 L-10 29 M1 15 L4 22 L0 30 L3 31" fill="none" stroke="#22b0a0" stroke-width="4.4" stroke-linejoin="round"/><path d="M-3 14 L-9 20 L-7 28 L-10 29 M1 15 L4 22 L0 30 L3 31" fill="none" stroke="#1c4c5c" stroke-width="2.6" stroke-linejoin="round"/><path d="M-5 3 Q1 -1 7 3 L5 15 L-7 14Z" fill="#3e2cb4" stroke="#22c0a8" stroke-width="1"/><path d="M2 4 L8 -2 L11 -3" fill="none" stroke="#30d0b0" stroke-width="2"/><ellipse cx="-1" cy="0" rx="3" ry="2.8" fill="#48d8bc"/></g>
<g transform="translate(464,221)" opacity="0.85"><path d="M-3 14 L-9 20 L-7 28 L-10 29 M1 15 L4 22 L0 30 L3 31" fill="none" stroke="#22b0a0" stroke-width="4.4" stroke-linejoin="round"/><path d="M-3 14 L-9 20 L-7 28 L-10 29 M1 15 L4 22 L0 30 L3 31" fill="none" stroke="#1c4c5c" stroke-width="2.6" stroke-linejoin="round"/><path d="M-5 3 Q1 -1 7 3 L5 15 L-7 14Z" fill="#3e2cb4" stroke="#22c0a8" stroke-width="1"/><path d="M2 4 L8 -2 L11 -3" fill="none" stroke="#30d0b0" stroke-width="2"/><ellipse cx="-1" cy="0" rx="3" ry="2.8" fill="#48d8bc"/></g>
<g transform="translate(477,225)" opacity="0.85"><path d="M-3 14 L-9 20 L-7 28 L-10 29 M1 15 L4 22 L0 30 L3 31" fill="none" stroke="#22b0a0" stroke-width="4.4" stroke-linejoin="round"/><path d="M-3 14 L-9 20 L-7 28 L-10 29 M1 15 L4 22 L0 30 L3 31" fill="none" stroke="#1c4c5c" stroke-width="2.6" stroke-linejoin="round"/><path d="M-5 3 Q1 -1 7 3 L5 15 L-7 14Z" fill="#3e2cb4" stroke="#22c0a8" stroke-width="1"/><path d="M2 4 L8 -2 L11 -3" fill="none" stroke="#30d0b0" stroke-width="2"/><ellipse cx="-1" cy="0" rx="3" ry="2.8" fill="#48d8bc"/></g>
<g transform="translate(490,231)" opacity="0.85"><path d="M-3 14 L-9 20 L-7 28 L-10 29 M1 15 L4 22 L0 30 L3 31" fill="none" stroke="#22b0a0" stroke-width="4.4" stroke-linejoin="round"/><path d="M-3 14 L-9 20 L-7 28 L-10 29 M1 15 L4 22 L0 30 L3 31" fill="none" stroke="#1c4c5c" stroke-width="2.6" stroke-linejoin="round"/><path d="M-5 3 Q1 -1 7 3 L5 15 L-7 14Z" fill="#3e2cb4" stroke="#22c0a8" stroke-width="1"/><path d="M2 4 L8 -2 L11 -3" fill="none" stroke="#30d0b0" stroke-width="2"/><ellipse cx="-1" cy="0" rx="3" ry="2.8" fill="#48d8bc"/></g>
<g transform="translate(502,237)" opacity="0.85"><path d="M-3 14 L-9 20 L-7 28 L-10 29 M1 15 L4 22 L0 30 L3 31" fill="none" stroke="#22b0a0" stroke-width="4.4" stroke-linejoin="round"/><path d="M-3 14 L-9 20 L-7 28 L-10 29 M1 15 L4 22 L0 30 L3 31" fill="none" stroke="#1c4c5c" stroke-width="2.6" stroke-linejoin="round"/><path d="M-5 3 Q1 -1 7 3 L5 15 L-7 14Z" fill="#3e2cb4" stroke="#22c0a8" stroke-width="1"/><path d="M2 4 L8 -2 L11 -3" fill="none" stroke="#30d0b0" stroke-width="2"/><ellipse cx="-1" cy="0" rx="3" ry="2.8" fill="#48d8bc"/></g>
<g transform="translate(515,242)" opacity="0.85"><path d="M-3 14 L-9 20 L-7 28 L-10 29 M1 15 L4 22 L0 30 L3 31" fill="none" stroke="#22b0a0" stroke-width="4.4" stroke-linejoin="round"/><path d="M-3 14 L-9 20 L-7 28 L-10 29 M1 15 L4 22 L0 30 L3 31" fill="none" stroke="#1c4c5c" stroke-width="2.6" stroke-linejoin="round"/><path d="M-5 3 Q1 -1 7 3 L5 15 L-7 14Z" fill="#3e2cb4" stroke="#22c0a8" stroke-width="1"/><path d="M2 4 L8 -2 L11 -3" fill="none" stroke="#30d0b0" stroke-width="2"/><ellipse cx="-1" cy="0" rx="3" ry="2.8" fill="#48d8bc"/></g>
<g transform="translate(528,247)" opacity="0.85"><path d="M-3 14 L-9 20 L-7 28 L-10 29 M1 15 L4 22 L0 30 L3 31" fill="none" stroke="#22b0a0" stroke-width="4.4" stroke-linejoin="round"/><path d="M-3 14 L-9 20 L-7 28 L-10 29 M1 15 L4 22 L0 30 L3 31" fill="none" stroke="#1c4c5c" stroke-width="2.6" stroke-linejoin="round"/><path d="M-5 3 Q1 -1 7 3 L5 15 L-7 14Z" fill="#3e2cb4" stroke="#22c0a8" stroke-width="1"/><path d="M2 4 L8 -2 L11 -3" fill="none" stroke="#30d0b0" stroke-width="2"/><ellipse cx="-1" cy="0" rx="3" ry="2.8" fill="#48d8bc"/></g>
<g transform="translate(538,252)" opacity="0.85"><path d="M-3 14 L-9 20 L-7 28 L-10 29 M1 15 L4 22 L0 30 L3 31" fill="none" stroke="#22b0a0" stroke-width="4.4" stroke-linejoin="round"/><path d="M-3 14 L-9 20 L-7 28 L-10 29 M1 15 L4 22 L0 30 L3 31" fill="none" stroke="#1c4c5c" stroke-width="2.6" stroke-linejoin="round"/><path d="M-5 3 Q1 -1 7 3 L5 15 L-7 14Z" fill="#3e2cb4" stroke="#22c0a8" stroke-width="1"/><path d="M2 4 L8 -2 L11 -3" fill="none" stroke="#30d0b0" stroke-width="2"/><ellipse cx="-1" cy="0" rx="3" ry="2.8" fill="#48d8bc"/></g>
<path d="M421 216 Q424 211 428 213 L428 222 L424 225 L421 222Z" fill="#e02a9a" opacity="0.85"/>
<ellipse cx="428" cy="212.5" rx="2.5" ry="2" fill="#d0d8e8" opacity="0.7"/>
<path d="M344 290 L347 286.6 L349 291 L348 296 L350.5 305 L351 321 L348 321 L346.5 310 L344.5 321 L341 321 L342.5 305 L343 296Z" fill="#3a3050" stroke="#e0206a" stroke-width="0.8"/>
<path d="M700 304 Q712 286 734 281.5 Q750 279.8 777 282 L777 320.5 L702 320.5Z" fill="#55585e"/>
<path d="M701.5 300 Q714 285 734 281.3 Q752 279.5 777 282.5 L777 286 Q752 283.5 736 285 Q716 289 706 302Z" fill="#8e9296"/>
<path d="M707 302 Q718 291 733 287 L736 290 Q722 294 712 304Z" fill="#6c7075"/>
<path d="M753 280.8 Q767 281.5 777 283.5 L777 293 Q766 289.5 754 288.5Z" fill="url(#cyg)"/>
<path d="M742 290 H760 L758 292 H744Z" fill="#7a7e82"/>
<path d="M750 293 Q766 295 777 298 L777 307 L748 309 Z" fill="#2c2b33"/>
<path d="M704 309 L777 306 L777 320.5 L706 320.5Z" fill="#48384e"/>
<path d="M744 312 L777 310.5 L777 314 L744 315Z" fill="#7a7c82"/>
<path d="M733 290 L741.6 290 L748 305.7 L739.5 305.7Z" fill="#8fb8c4"/>
<path d="M719 290 Q724 287 728.5 290 L728 302 L719 302Z" fill="#9a9ea2"/>
<circle cx="723.8" cy="296.5" r="1.8" fill="#3a3a42"/>
<path d="M713.5 302.4 L727.6 302.4 L721 316.5 L713.5 316.5Z" fill="#9da1a5"/>
<path d="M735 309 L741 309 L732 320 L726 320Z" fill="#5a5e64"/>
<circle cx="699.5" cy="312.5" r="8.8" fill="#12282e"/>
<circle cx="700.5" cy="313" r="7.4" fill="#8a8d92"/>
<circle cx="699.5" cy="313.5" r="3.6" fill="none" stroke="#6a6d72" stroke-width="0.9"/>
<rect x="700" y="306" width="14" height="4" fill="#8a8d92"/>
</svg>
<div style="left:205.00px;top:384.90px;width:367.50px;height:1.00px;background:#2e5680;"></div>
<div style="left:206.00px;top:385.80px;width:366.50px;height:12.00px;background:#3a4f68;"></div>
<div style="left:206.00px;top:397.80px;width:366.50px;height:1.00px;background:#2c5785;"></div>
<svg style="position:absolute;left:209.00px;top:388.80px" width="7" height="7" viewBox="0 0 7 7"><rect x="0" y="0" width="7" height="1.2" fill="#fff"/><path d="M0 2.2 H7 L3.5 6.5Z" fill="#fff"/></svg>
<div style="left:218.00px;top:386.80px;width:59.50px;height:11.00px;background:#244a7a;"></div>
<div class="t" style="left:220.00px;top:388.72px;font-size:8.6px;color:#dde4ee;transform:scaleX(0.753);">Asset Library</div>
<svg style="position:absolute;left:562.00px;top:388.80px" width="7" height="7" viewBox="0 0 7 7"><path d="M0.4 0.4 L6.6 6.6 M6.6 0.4 L0.4 6.6" stroke="#e6ebf0" stroke-width="0.75"/></svg>
<div style="left:210.00px;top:403.30px;width:47.10px;height:12.30px;background:#3a6a5e;"></div>
<div class="t" style="left:212.00px;top:405.62px;font-size:8.6px;color:#dfe5ec;transform:scaleX(0.755);">Refresh Library</div>
<div style="left:261.00px;top:403.30px;width:12.70px;height:12.30px;background:#3b516b;"></div>
<div class="t" style="left:276.00px;top:405.62px;font-size:8.6px;color:#dfe5ec;transform:scaleX(0.772);">full name</div>
<div style="left:307.30px;top:403.30px;width:237.70px;height:12.30px;background:#3b516b;"></div>
<div class="t" style="left:547.60px;top:405.62px;font-size:8.6px;color:#dfe5ec;transform:scaleX(0.772);">search</div>
<div style="left:210.00px;top:418.50px;width:27.00px;height:12.00px;background:#2b5a94;border-radius:2px 2px 0 0;"></div>
<div class="t" style="left:212.30px;top:420.32px;font-size:8.6px;color:#e0e8f2;transform:scaleX(0.756);">Prefabs</div>
<div style="left:239.30px;top:418.50px;width:32.50px;height:12.00px;background:#3a6cb0;border-radius:2px 2px 0 0;"></div>
<div class="t" style="left:241.60px;top:420.32px;font-size:8.6px;color:#e0e8f2;transform:scaleX(0.658);">MATERIAL</div>
<div style="left:274.00px;top:418.50px;width:30.80px;height:12.00px;background:#2b5a94;border-radius:2px 2px 0 0;"></div>
<div class="t" style="left:276.30px;top:420.32px;font-size:8.6px;color:#e0e8f2;transform:scaleX(0.653);">TEXTURE</div>
<div style="left:307.30px;top:418.50px;width:28.30px;height:12.00px;background:#2b5a94;border-radius:2px 2px 0 0;"></div>
<div class="t" style="left:309.60px;top:420.32px;font-size:8.6px;color:#e0e8f2;transform:scaleX(0.661);">SHADER</div>
<div style="left:338.00px;top:418.50px;width:50.00px;height:12.00px;background:#2b5a94;border-radius:2px 2px 0 0;"></div>
<div class="t" style="left:340.30px;top:420.32px;font-size:8.6px;color:#e0e8f2;transform:scaleX(0.660);">AUDIO_SOURCE</div>
<div style="left:390.00px;top:418.50px;width:19.30px;height:12.00px;background:#2b5a94;border-radius:2px 2px 0 0;"></div>
<div class="t" style="left:392.30px;top:420.32px;font-size:8.6px;color:#e0e8f2;transform:scaleX(0.628);">AREA</div>
<div style="left:412.20px;top:418.50px;width:48.30px;height:12.00px;background:#2b5a94;border-radius:2px 2px 0 0;"></div>
<div class="t" style="left:414.50px;top:420.32px;font-size:8.6px;color:#e0e8f2;transform:scaleX(0.677);">SPRITE_SHEET</div>
<div style="left:463.40px;top:418.50px;width:40.00px;height:12.00px;background:#2b5a94;border-radius:2px 2px 0 0;"></div>
<div class="t" style="left:465.70px;top:420.32px;font-size:8.6px;color:#e0e8f2;transform:scaleX(0.667);">LUA_SCRIPT</div>
<div style="left:506.00px;top:418.50px;width:45.00px;height:12.00px;background:#2b5a94;border-radius:2px 2px 0 0;"></div>
<div class="t" style="left:508.30px;top:420.32px;font-size:8.6px;color:#e0e8f2;transform:scaleX(0.671);">BITMAP_FONT</div>
<div style="left:210.00px;top:430.20px;width:358.00px;height:1.00px;background:#2d5a92;"></div>
<div style="left:210.50px;top:431.20px;width:357.50px;height:118.50px;background:#364c64;"></div>
<div style="left:383.30px;top:431.20px;width:0.80px;height:118.50px;background:#2c3e54;"></div>
<div style="left:559.80px;top:431.20px;width:8.20px;height:118.60px;background:#394f68;"></div>
<div style="left:561.00px;top:448.00px;width:4.50px;height:8.00px;background:#3d6088;border-radius:2px;"></div>
<div style="left:0;top:0;width:1024px;height:555px;clip-path:inset(431.2px 456px 5.3px 210.5px)">
<div style="left:214.00px;top:424.07px;width:62.30px;height:12.30px;background:#13b35c;"></div>
<div style="left:214.00px;top:439.00px;width:62.30px;height:12.30px;background:#13b35c;"></div>
<div class="t" style="left:216.00px;top:442.02px;font-size:8.6px;color:#eef3f0;transform:scaleX(0.696);">ATLAS[4]_MATERIAL</div>
<div class="t" style="left:281.30px;top:442.02px;font-size:8.6px;color:#8f9aa6;transform:scaleX(0.748);">Ref Count: 1</div>
<div style="left:214.00px;top:453.93px;width:62.30px;height:12.30px;background:#13b35c;"></div>
<div class="t" style="left:216.00px;top:456.95px;font-size:8.6px;color:#eef3f0;transform:scaleX(0.696);">ATLAS[2]_MATERIAL</div>
<div class="t" style="left:281.30px;top:456.95px;font-size:8.6px;color:#8f9aa6;transform:scaleX(0.748);">Ref Count: 1</div>
<div style="left:214.00px;top:468.86px;width:62.30px;height:12.30px;background:#13b35c;"></div>
<div class="t" style="left:216.00px;top:471.88px;font-size:8.6px;color:#eef3f0;transform:scaleX(0.696);">ATLAS[0]_MATERIAL</div>
<div class="t" style="left:281.30px;top:471.88px;font-size:8.6px;color:#8f9aa6;transform:scaleX(0.748);">Ref Count: 1</div>
<div style="left:214.00px;top:483.79px;width:113.00px;height:12.30px;background:#13b35c;"></div>
<div class="t" style="left:216.00px;top:486.81px;font-size:8.6px;color:#eef3f0;transform:scaleX(0.757);">XBox_360_Controller_X.material.json</div>
<div class="t" style="left:332.00px;top:486.81px;font-size:8.6px;color:#8f9aa6;transform:scaleX(0.748);">Ref Count: 1</div>
<div style="left:214.00px;top:498.72px;width:164.70px;height:12.30px;background:#3a6a5e;"></div>
<div class="t" style="left:216.00px;top:501.74px;font-size:8.6px;color:#eef3f0;transform:scaleX(0.759);">XBox_360_Controller_RightStick.material.material.json</div>
<div style="left:214.00px;top:513.65px;width:116.00px;height:12.30px;background:#13b35c;"></div>
<div class="t" style="left:216.00px;top:516.67px;font-size:8.6px;color:#eef3f0;transform:scaleX(0.760);">XBox_360_Controller_LT.material.json</div>
<div class="t" style="left:335.00px;top:516.67px;font-size:8.6px;color:#8f9aa6;transform:scaleX(0.748);">Ref Count: 2</div>
<div style="left:214.00px;top:528.58px;width:116.30px;height:12.30px;background:#13b35c;"></div>
<div class="t" style="left:216.00px;top:531.60px;font-size:8.6px;color:#eef3f0;transform:scaleX(0.754);">XBox_360_Controller_LB.material.json</div>
<div class="t" style="left:335.30px;top:531.60px;font-size:8.6px;color:#8f9aa6;transform:scaleX(0.748);">Ref Count: 1</div>
<div style="left:214.00px;top:543.51px;width:113.00px;height:12.30px;background:#13b35c;"></div>
<div class="t" style="left:216.00px;top:546.53px;font-size:8.6px;color:#eef3f0;transform:scaleX(0.757);">XBox_360_Controller_A.material.json</div>
<div class="t" style="left:332.00px;top:546.53px;font-size:8.6px;color:#8f9aa6;transform:scaleX(0.748);">Ref Count: 2</div>
<div style="left:388.20px;top:424.07px;width:62.10px;height:12.30px;background:#13b35c;"></div>
<div style="left:388.20px;top:439.00px;width:62.10px;height:12.30px;background:#13b35c;"></div>
<div class="t" style="left:390.20px;top:442.02px;font-size:8.6px;color:#eef3f0;transform:scaleX(0.696);">ATLAS[3]_MATERIAL</div>
<div class="t" style="left:455.30px;top:442.02px;font-size:8.6px;color:#8f9aa6;transform:scaleX(0.748);">Ref Count: 1</div>
<div style="left:388.20px;top:453.93px;width:62.10px;height:12.30px;background:#13b35c;"></div>
<div class="t" style="left:390.20px;top:456.95px;font-size:8.6px;color:#eef3f0;transform:scaleX(0.696);">ATLAS[1]_MATERIAL</div>
<div class="t" style="left:455.30px;top:456.95px;font-size:8.6px;color:#8f9aa6;transform:scaleX(0.748);">Ref Count: 1</div>
<div style="left:388.20px;top:468.86px;width:52.80px;height:12.30px;background:#3a6a5e;"></div>
<div class="t" style="left:390.20px;top:471.88px;font-size:8.6px;color:#eef3f0;transform:scaleX(0.772);">yes.material.json</div>
<div style="left:388.20px;top:483.79px;width:116.80px;height:12.30px;background:#13b35c;"></div>
<div class="t" style="left:390.20px;top:486.81px;font-size:8.6px;color:#eef3f0;transform:scaleX(0.759);">XBox_360_Controller_RT.material.json</div>
<div class="t" style="left:510.00px;top:486.81px;font-size:8.6px;color:#8f9aa6;transform:scaleX(0.748);">Ref Count: 1</div>
<div style="left:388.20px;top:498.72px;width:117.20px;height:12.30px;background:#13b35c;"></div>
<div class="t" style="left:390.20px;top:501.74px;font-size:8.6px;color:#eef3f0;transform:scaleX(0.754);">XBox_360_Controller_RB.material.json</div>
<div class="t" style="left:510.40px;top:501.74px;font-size:8.6px;color:#8f9aa6;transform:scaleX(0.750);">Ref Count: 21</div>
<div style="left:388.20px;top:513.65px;width:126.60px;height:12.30px;background:#3a6a5e;"></div>
<div class="t" style="left:390.20px;top:516.67px;font-size:8.6px;color:#eef3f0;transform:scaleX(0.759);">Xbox_360_Controller_LStick.material.json</div>
<div style="left:388.20px;top:528.58px;width:112.50px;height:12.30px;background:#3a6a5e;"></div>
<div class="t" style="left:390.20px;top:531.60px;font-size:8.6px;color:#eef3f0;transform:scaleX(0.757);">XBox_360_Controller_B.material.json</div>
<div style="left:388.20px;top:543.51px;width:80.30px;height:12.30px;background:#13b35c;"></div>
<div class="t" style="left:390.20px;top:546.53px;font-size:8.6px;color:#eef3f0;transform:scaleX(0.759);">White_Circle.material.json</div>
<div class="t" style="left:473.50px;top:546.53px;font-size:8.6px;color:#8f9aa6;transform:scaleX(0.748);">Ref Count: 8</div>
</div>
<div style="left:572.20px;top:384.90px;width:1.60px;height:170.10px;background:#2e5680;"></div>
<div style="left:574.00px;top:384.90px;width:205.00px;height:1.00px;background:#2e5680;"></div>
<div style="left:573.80px;top:385.80px;width:205.00px;height:12.00px;background:#3a4f68;"></div>
<div style="left:573.80px;top:397.80px;width:205.00px;height:1.00px;background:#2c5785;"></div>
<svg style="position:absolute;left:576.80px;top:388.80px" width="7" height="7" viewBox="0 0 7 7"><rect x="0" y="0" width="7" height="1.2" fill="#fff"/><path d="M0 2.2 H7 L3.5 6.5Z" fill="#fff"/></svg>
<div style="left:585.80px;top:386.80px;width:62.00px;height:11.00px;background:#244a7a;"></div>
<div class="t" style="left:587.80px;top:388.72px;font-size:8.6px;color:#dde4ee;transform:scaleX(0.753);">Asset Preview</div>
<svg style="position:absolute;left:766.80px;top:388.80px" width="7" height="7" viewBox="0 0 7 7"><path d="M0.4 0.4 L6.6 6.6 M6.6 0.4 L0.4 6.6" stroke="#e6ebf0" stroke-width="0.75"/></svg>
<div class="t" style="left:578.00px;top:402.62px;font-size:8.6px;color:#dfe5ec;transform:scaleX(0.754);">No Asset Selected</div>
<div style="left:574.00px;top:398.50px;width:1.00px;height:157.00px;background:#2f455c;"></div>
<div style="left:779.00px;top:25.00px;width:245.00px;height:530.00px;background:#34495f;"></div>
<div style="left:777.30px;top:37.00px;width:1.70px;height:518.00px;background:#2e5680;"></div>
<div style="left:779.00px;top:25.00px;width:245.00px;height:12.00px;background:#2b80c1;"></div>
<div style="left:789.80px;top:26.00px;width:57.20px;height:11.00px;background:#3567aa;"></div>
<div class="t" style="left:792.50px;top:27.22px;font-size:8.6px;color:#e6edf5;transform:scaleX(0.766);">Inspector</div>
<div style="left:1016.00px;top:37.00px;width:8.00px;height:518.00px;background:#3a4f68;"></div>
<div style="left:0;top:0;width:1024px;height:555px;clip-path:inset(37px 8px 0 779px)">
<div style="left:792.30px;top:31.20px;width:221.70px;height:12.40px;background:#2c70a4;"></div>
<svg style="position:absolute;left:797px;top:34.40px" width="6" height="6" viewBox="0 0 6 6"><path d="M0 0 L5.6 3 L0 6Z" fill="#fff"/></svg>
<div class="t" style="left:809.00px;top:33.62px;font-size:8.6px;color:#e6edf5;transform:scaleX(0.752);">Collider</div>
<div style="left:792.30px;top:46.00px;width:221.70px;height:12.40px;background:#2c70a4;"></div>
<svg style="position:absolute;left:796.6px;top:49.40px" width="6" height="6" viewBox="0 0 6 6"><path d="M0 0 H6 L3 5.6Z" fill="#fff"/></svg>
<div class="t" style="left:809.00px;top:48.42px;font-size:8.6px;color:#e6edf5;transform:scaleX(0.753);">ParticleEmitter</div>
<div style="left:793.80px;top:61.00px;width:13.00px;height:12.80px;background:#3b516b;"></div>
<div class="t" style="left:809.00px;top:63.92px;font-size:8.6px;color:#dfe5ec;transform:scaleX(0.772);">instantly populate</div>
<div style="left:793.80px;top:76.00px;width:13.00px;height:12.80px;background:#3b516b;"></div>
<div class="t" style="left:809.00px;top:78.92px;font-size:8.6px;color:#dfe5ec;transform:scaleX(0.772);">not spawning</div>
<svg style="position:absolute;left:798.8px;top:92.8px" width="5" height="5" viewBox="0 0 5 5"><path d="M0 0 L4.5 2.5 L0 5Z" fill="#fff"/></svg>
<div class="t" style="left:808.00px;top:90.22px;font-size:8.6px;color:#dfe5ec;transform:scaleX(0.772);">transform</div>
<div style="left:793.80px;top:101.94px;width:13.00px;height:12.80px;background:#3b516b;"></div>
<svg style="position:absolute;left:796px;top:104.14px" width="9" height="8" viewBox="0 0 9 8"><path d="M1 4 L3.3 6.5 L8 1" fill="none" stroke="#3d8fd8" stroke-width="1.3"/></svg>
<div class="t" style="left:809.00px;top:104.86px;font-size:8.6px;color:#dfe5ec;transform:scaleX(0.772);">is active</div>
<div style="left:794.00px;top:116.90px;width:147.00px;height:13.00px;background:#3b516b;"></div>
<div style="left:941.00px;top:116.90px;width:12.50px;height:13.00px;background:#3a6a5e;"></div>
<svg style="position:absolute;left:944px;top:120.20px" width="7" height="6.5" viewBox="0 0 7 6.5"><path d="M0 0 H7 L3.5 6.5Z" fill="#fff"/></svg>
<div class="t" style="left:796.00px;top:119.82px;font-size:8.6px;color:#dfe5ec;transform:scaleX(0.680);">CHANGE</div>
<div class="t" style="left:955.80px;top:119.82px;font-size:8.6px;color:#dfe5ec;transform:scaleX(0.772);">color fx</div>
<div style="left:794.00px;top:131.86px;width:147.00px;height:13.00px;background:#3b516b;"></div>
<div style="left:941.00px;top:131.86px;width:12.50px;height:13.00px;background:#3a6a5e;"></div>
<svg style="position:absolute;left:944px;top:135.16px" width="7" height="6.5" viewBox="0 0 7 6.5"><path d="M0 0 H7 L3.5 6.5Z" fill="#fff"/></svg>
<div class="t" style="left:796.00px;top:134.78px;font-size:8.6px;color:#dfe5ec;transform:scaleX(0.680);">POINT</div>
<div class="t" style="left:955.80px;top:134.78px;font-size:8.6px;color:#dfe5ec;transform:scaleX(0.772);">spawn shape</div>
<div style="left:794.00px;top:146.82px;width:147.00px;height:13.00px;background:#3b516b;"></div>
<div style="left:941.00px;top:146.82px;width:12.50px;height:13.00px;background:#3a6a5e;"></div>
<svg style="position:absolute;left:944px;top:150.12px" width="7" height="6.5" viewBox="0 0 7 6.5"><path d="M0 0 H7 L3.5 6.5Z" fill="#fff"/></svg>
<div class="t" style="left:796.00px;top:149.74px;font-size:8.6px;color:#dfe5ec;transform:scaleX(0.680);">LINEAR</div>
<div class="t" style="left:955.80px;top:149.74px;font-size:8.6px;color:#dfe5ec;transform:scaleX(0.772);">motion</div>
<div style="left:792.30px;top:161.98px;width:221.70px;height:12.40px;background:#2c70a4;"></div>
<svg style="position:absolute;left:797px;top:165.18px" width="6" height="6" viewBox="0 0 6 6"><path d="M0 0 L5.6 3 L0 6Z" fill="#fff"/></svg>
<div class="t" style="left:809.00px;top:164.40px;font-size:8.6px;color:#e6edf5;transform:scaleX(0.759);">Animation Properties</div>
<div style="left:792.30px;top:176.94px;width:221.70px;height:12.40px;background:#2c70a4;"></div>
<svg style="position:absolute;left:797px;top:180.14px" width="6" height="6" viewBox="0 0 6 6"><path d="M0 0 L5.6 3 L0 6Z" fill="#fff"/></svg>
<div class="t" style="left:809.00px;top:179.36px;font-size:8.6px;color:#e6edf5;transform:scaleX(0.755);">Masked Properties</div>
<div style="left:793.80px;top:191.70px;width:13.00px;height:12.80px;background:#3b516b;"></div>
<div class="t" style="left:809.00px;top:194.62px;font-size:8.6px;color:#dfe5ec;transform:scaleX(0.772);">initially rotate with direction</div>
<div style="left:793.80px;top:206.66px;width:13.00px;height:12.80px;background:#3b516b;"></div>
<svg style="position:absolute;left:796px;top:208.86px" width="9" height="8" viewBox="0 0 9 8"><path d="M1 4 L3.3 6.5 L8 1" fill="none" stroke="#3d8fd8" stroke-width="1.3"/></svg>
<div class="t" style="left:809.00px;top:209.58px;font-size:8.6px;color:#dfe5ec;transform:scaleX(0.772);">continually rotate with direction</div>
<div style="left:794.00px;top:221.62px;width:159.50px;height:13.00px;background:#3b516b;"></div>
<div class="t c" style="left:673.70px;top:224.54px;width:400px;font-size:8.6px;color:#dfe5ec;transform:scaleX(0.772);">0.000</div>
<div class="t" style="left:955.80px;top:224.54px;font-size:8.6px;color:#dfe5ec;transform:scaleX(0.772);">linear drag</div>
<div style="left:794.00px;top:236.58px;width:159.50px;height:13.00px;background:#3b516b;"></div>
<div class="t c" style="left:673.70px;top:239.50px;width:400px;font-size:8.6px;color:#dfe5ec;transform:scaleX(0.772);">0.000</div>
<div class="t" style="left:955.80px;top:239.50px;font-size:8.6px;color:#dfe5ec;transform:scaleX(0.772);">angular drag</div>
<div style="left:793.80px;top:251.54px;width:13.00px;height:12.80px;background:#3b516b;"></div>
<div class="t" style="left:809.00px;top:254.46px;font-size:8.6px;color:#dfe5ec;transform:scaleX(0.772);">physical particles</div>
<div style="left:794.00px;top:266.50px;width:18.70px;height:13.00px;background:#3a6a5e;"></div>
<div class="t" style="left:796.00px;top:269.12px;font-size:8.6px;color:#dfe5ec;transform:scaleX(0.772);">clear</div>
<div style="left:817.00px;top:266.50px;width:15.00px;height:13.00px;background:#3a6a5e;"></div>
<div class="t" style="left:819.00px;top:269.12px;font-size:8.6px;color:#dfe5ec;transform:scaleX(0.772);">edit</div>
<div style="left:836.80px;top:266.50px;width:159.40px;height:13.00px;background:#3b516b;"></div>
<div class="t" style="left:839.00px;top:269.42px;font-size:8.6px;color:#dfe5ec;transform:scaleX(0.767);">assets/materials/Gutz.material.json</div>
<div class="t" style="left:997.80px;top:269.42px;font-size:8.6px;color:#dfe5ec;transform:scaleX(0.772);">material</div>
<div style="left:794.00px;top:281.46px;width:78.30px;height:13.00px;background:#3b516b;"></div>
<div class="t c" style="left:633.00px;top:284.38px;width:400px;font-size:8.6px;color:#dfe5ec;transform:scaleX(0.772);">0.000</div>
<div style="left:874.60px;top:281.46px;width:78.90px;height:13.00px;background:#3b516b;"></div>
<div class="t c" style="left:714.00px;top:284.38px;width:400px;font-size:8.6px;color:#dfe5ec;transform:scaleX(0.772);">0.000</div>
<div class="t" style="left:955.80px;top:284.38px;font-size:8.6px;color:#dfe5ec;transform:scaleX(0.772);">direction</div>
<div style="left:794.00px;top:296.42px;width:78.30px;height:13.00px;background:#3b516b;"></div>
<div class="t c" style="left:633.00px;top:299.34px;width:400px;font-size:8.6px;color:#dfe5ec;transform:scaleX(0.772);">0.000</div>
<div style="left:874.60px;top:296.42px;width:78.90px;height:13.00px;background:#3b516b;"></div>
<div class="t c" style="left:714.00px;top:299.34px;width:400px;font-size:8.6px;color:#dfe5ec;transform:scaleX(0.772);">0.000</div>
<div class="t" style="left:955.80px;top:299.34px;font-size:8.6px;color:#dfe5ec;transform:scaleX(0.772);">inherited velocity</div>
<div style="left:794.00px;top:311.38px;width:78.30px;height:13.00px;background:#3b516b;"></div>
<div class="t c" style="left:633.00px;top:314.30px;width:400px;font-size:8.6px;color:#dfe5ec;transform:scaleX(0.772);">0.000</div>
<div style="left:874.60px;top:311.38px;width:78.90px;height:13.00px;background:#3b516b;"></div>
<div class="t c" style="left:714.00px;top:314.30px;width:400px;font-size:8.6px;color:#dfe5ec;transform:scaleX(0.772);">0.000</div>
<div class="t" style="left:955.80px;top:314.30px;font-size:8.6px;color:#dfe5ec;transform:scaleX(0.772);">acceleration</div>
<div style="left:794.00px;top:326.34px;width:78.30px;height:13.00px;background:#3b516b;"></div>
<div class="t c" style="left:633.00px;top:329.26px;width:400px;font-size:8.6px;color:#dfe5ec;transform:scaleX(0.772);">1.000</div>
<div style="left:874.60px;top:326.34px;width:78.90px;height:13.00px;background:#3b516b;"></div>
<div class="t c" style="left:714.00px;top:329.26px;width:400px;font-size:8.6px;color:#dfe5ec;transform:scaleX(0.772);">1.000</div>
<div class="t" style="left:955.80px;top:329.26px;font-size:8.6px;color:#dfe5ec;transform:scaleX(0.772);">random influence</div>
<div style="left:794.00px;top:341.30px;width:78.30px;height:13.00px;background:#3b516b;"></div>
<div class="t c" style="left:633.00px;top:344.22px;width:400px;font-size:8.6px;color:#dfe5ec;transform:scaleX(0.772);">-2.000</div>
<div style="left:874.60px;top:341.30px;width:78.90px;height:13.00px;background:#3b516b;"></div>
<div class="t c" style="left:714.00px;top:344.22px;width:400px;font-size:8.6px;color:#dfe5ec;transform:scaleX(0.772);">2.000</div>
<div class="t" style="left:955.80px;top:344.22px;font-size:8.6px;color:#dfe5ec;transform:scaleX(0.772);">start size</div>
<div style="left:794.00px;top:356.26px;width:78.30px;height:13.00px;background:#3b516b;"></div>
<div class="t c" style="left:633.00px;top:359.18px;width:400px;font-size:8.6px;color:#dfe5ec;transform:scaleX(0.772);">-2.000</div>
<div style="left:874.60px;top:356.26px;width:78.90px;height:13.00px;background:#3b516b;"></div>
<div class="t c" style="left:714.00px;top:359.18px;width:400px;font-size:8.6px;color:#dfe5ec;transform:scaleX(0.772);">2.000</div>
<div class="t" style="left:955.80px;top:359.18px;font-size:8.6px;color:#dfe5ec;transform:scaleX(0.772);">end size</div>
<div style="left:793.80px;top:371.22px;width:35.00px;height:13.00px;background:#3b516b;"></div>
<div class="t c" style="left:611.30px;top:374.14px;width:400px;font-size:8.6px;color:#dfe5ec;transform:scaleX(0.753);">R:0.513</div>
<div style="left:830.40px;top:371.22px;width:35.20px;height:13.00px;background:#3b516b;"></div>
<div class="t c" style="left:648.00px;top:374.14px;width:400px;font-size:8.6px;color:#dfe5ec;transform:scaleX(0.752);">G:1.263</div>
<div style="left:867.20px;top:371.22px;width:35.00px;height:13.00px;background:#3b516b;"></div>
<div class="t c" style="left:684.70px;top:374.14px;width:400px;font-size:8.6px;color:#dfe5ec;transform:scaleX(0.754);">B:1.132</div>
<div style="left:903.60px;top:371.22px;width:35.60px;height:13.00px;background:#3b516b;"></div>
<div class="t c" style="left:721.40px;top:374.14px;width:400px;font-size:8.6px;color:#dfe5ec;transform:scaleX(0.754);">A:1.000</div>
<div style="left:940.80px;top:371.62px;width:12.20px;height:12.00px;background:#80f8fc;"></div>
<div class="t" style="left:955.80px;top:374.14px;font-size:8.6px;color:#dfe5ec;transform:scaleX(0.772);">start color</div>
<div style="left:793.80px;top:386.18px;width:35.00px;height:13.00px;background:#3b516b;"></div>
<div class="t c" style="left:611.30px;top:389.10px;width:400px;font-size:8.6px;color:#dfe5ec;transform:scaleX(0.753);">R:0.621</div>
<div style="left:830.40px;top:386.18px;width:35.20px;height:13.00px;background:#3b516b;"></div>
<div class="t c" style="left:648.00px;top:389.10px;width:400px;font-size:8.6px;color:#dfe5ec;transform:scaleX(0.752);">G:1.950</div>
<div style="left:867.20px;top:386.18px;width:35.00px;height:13.00px;background:#3b516b;"></div>
<div class="t c" style="left:684.70px;top:389.10px;width:400px;font-size:8.6px;color:#dfe5ec;transform:scaleX(0.754);">B:1.718</div>
<div style="left:903.60px;top:386.18px;width:35.60px;height:13.00px;background:#3b516b;"></div>
<div class="t c" style="left:721.40px;top:389.10px;width:400px;font-size:8.6px;color:#dfe5ec;transform:scaleX(0.754);">A:0.110</div>
<div style="left:940.80px;top:386.58px;width:12.20px;height:12.00px;background:#a2fbfc;"></div>
<div class="t" style="left:955.80px;top:389.10px;font-size:8.6px;color:#dfe5ec;transform:scaleX(0.772);">end color</div>
<div style="left:794.00px;top:401.14px;width:159.50px;height:13.00px;background:#3b516b;"></div>
<div class="t c" style="left:673.70px;top:404.06px;width:400px;font-size:8.6px;color:#dfe5ec;transform:scaleX(0.772);">10</div>
<div class="t" style="left:955.80px;top:404.06px;font-size:8.6px;color:#dfe5ec;transform:scaleX(0.772);">max particles</div>
<div style="left:794.00px;top:416.10px;width:159.50px;height:13.00px;background:#3b516b;"></div>
<div class="t c" style="left:673.70px;top:419.02px;width:400px;font-size:8.6px;color:#dfe5ec;transform:scaleX(0.772);">1.000</div>
<div class="t" style="left:955.80px;top:419.02px;font-size:8.6px;color:#dfe5ec;transform:scaleX(0.772);">spawn speed</div>
<div style="left:794.00px;top:431.06px;width:159.50px;height:13.00px;background:#3b516b;"></div>
<div class="t c" style="left:673.70px;top:433.98px;width:400px;font-size:8.6px;color:#dfe5ec;transform:scaleX(0.772);">0.150</div>
<div class="t" style="left:955.80px;top:433.98px;font-size:8.6px;color:#dfe5ec;transform:scaleX(0.772);">min lifetime</div>
<div style="left:794.00px;top:446.02px;width:159.50px;height:13.00px;background:#3b516b;"></div>
<div class="t c" style="left:673.70px;top:448.94px;width:400px;font-size:8.6px;color:#dfe5ec;transform:scaleX(0.772);">0.300</div>
<div class="t" style="left:955.80px;top:448.94px;font-size:8.6px;color:#dfe5ec;transform:scaleX(0.772);">max lifetime</div>
<div style="left:794.00px;top:460.98px;width:78.30px;height:13.00px;background:#3b516b;"></div>
<div class="t c" style="left:633.00px;top:463.50px;width:400px;font-size:8.6px;color:#dfe5ec;transform:scaleX(0.772);">-1.571</div>
<div style="left:874.60px;top:460.98px;width:78.90px;height:13.00px;background:#3b516b;"></div>
<div class="t c" style="left:714.00px;top:463.50px;width:400px;font-size:8.6px;color:#dfe5ec;transform:scaleX(0.772);">1.571</div>
<div class="t" style="left:955.80px;top:463.50px;font-size:8.6px;color:#dfe5ec;transform:scaleX(0.772);">spawn angle range (r</div>
<div style="left:794.00px;top:475.94px;width:78.30px;height:13.00px;background:#3b516b;"></div>
<div class="t c" style="left:633.00px;top:478.46px;width:400px;font-size:8.6px;color:#dfe5ec;transform:scaleX(0.772);">0.000</div>
<div style="left:874.60px;top:475.94px;width:78.90px;height:13.00px;background:#3b516b;"></div>
<div class="t c" style="left:714.00px;top:478.46px;width:400px;font-size:8.6px;color:#dfe5ec;transform:scaleX(0.772);">0.000</div>
<div class="t" style="left:955.80px;top:478.46px;font-size:8.6px;color:#dfe5ec;transform:scaleX(0.772);">rotation speed range</div>
<div style="left:794.00px;top:490.90px;width:49.70px;height:13.00px;background:#3a6a5e;"></div>
<div class="t" style="left:796.00px;top:492.92px;font-size:8.6px;color:#dfe5ec;transform:scaleX(0.753);">Restart Emitter</div>
<div style="left:848.00px;top:490.90px;width:56.00px;height:13.00px;background:#3a6a5e;"></div>
<div class="t" style="left:850.00px;top:492.92px;font-size:8.6px;color:#dfe5ec;transform:scaleX(0.749);">Export Particle Fx</div>
<div style="left:908.20px;top:490.90px;width:55.80px;height:13.00px;background:#3a6a5e;"></div>
<div class="t" style="left:910.20px;top:492.92px;font-size:8.6px;color:#dfe5ec;transform:scaleX(0.754);">Import Particle Fx</div>
<div style="left:794.00px;top:505.86px;width:72.30px;height:12.80px;background:#3a6a5e;"></div>
<div class="t" style="left:796.00px;top:507.88px;font-size:8.6px;color:#dfe5ec;transform:scaleX(0.754);">Remove ParticleEmitter</div>
<div style="left:781.00px;top:521.10px;width:235.00px;height:0.90px;background:#2f455c;"></div>
<div style="left:792.30px;top:523.60px;width:221.70px;height:12.40px;background:#2c70a4;"></div>
<svg style="position:absolute;left:797px;top:526.80px" width="6" height="6" viewBox="0 0 6 6"><path d="M0 0 L5.6 3 L0 6Z" fill="#fff"/></svg>
<div class="t" style="left:809.00px;top:526.02px;font-size:8.6px;color:#e6edf5;transform:scaleX(0.758);">Animation</div>
<div style="left:792.30px;top:538.60px;width:221.70px;height:12.40px;background:#2c70a4;"></div>
<svg style="position:absolute;left:797px;top:541.80px" width="6" height="6" viewBox="0 0 6 6"><path d="M0 0 L5.6 3 L0 6Z" fill="#fff"/></svg>
<div class="t" style="left:809.00px;top:541.02px;font-size:8.6px;color:#e6edf5;transform:scaleX(0.766);">CameraTarget</div>
<div style="left:792.30px;top:553.60px;width:221.70px;height:12.40px;background:#2c70a4;"></div>
<svg style="position:absolute;left:797px;top:556.80px" width="6" height="6" viewBox="0 0 6 6"><path d="M0 0 L5.6 3 L0 6Z" fill="#fff"/></svg>
<div class="t" style="left:809.00px;top:556.02px;font-size:8.6px;color:#e6edf5;transform:scaleX(0.749);">Sprite</div>
</div>
<div style="left:782.00px;top:17.60px;width:239.30px;height:5.30px;background:#ee1c24;"></div>
<div style="left:782.00px;top:488.30px;width:239.30px;height:5.30px;background:#ee1c24;"></div>
<div style="left:782.00px;top:17.60px;width:5.30px;height:476.00px;background:#ee1c24;"></div>
<div style="left:1016.00px;top:17.60px;width:5.30px;height:476.00px;background:#ee1c24;"></div>
<div style="left:783.40px;top:110.00px;width:238.80px;height:5.30px;background:#10cc44;"></div>
<div style="left:783.40px;top:160.70px;width:238.80px;height:5.30px;background:#10cc44;"></div>
<div style="left:783.40px;top:110.00px;width:5.30px;height:56.00px;background:#10cc44;"></div>
<div style="left:1016.90px;top:110.00px;width:5.30px;height:56.00px;background:#10cc44;"></div>
<div style="left:783.00px;top:366.60px;width:240.00px;height:5.60px;background:#10cc44;"></div>
<div style="left:783.00px;top:461.40px;width:240.00px;height:5.60px;background:#10cc44;"></div>
<div style="left:783.00px;top:366.60px;width:5.60px;height:100.40px;background:#10cc44;"></div>
<div style="left:1017.40px;top:366.60px;width:5.60px;height:100.40px;background:#10cc44;"></div>
</body></html>
